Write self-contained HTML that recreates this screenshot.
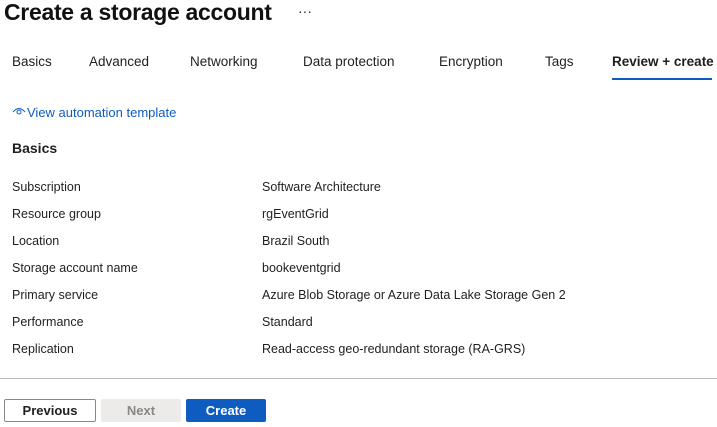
<!DOCTYPE html><html><head><style>
body{margin:0;width:717px;height:427px;overflow:hidden;background:#fff;font-family:"Liberation Sans",sans-serif;color:#201f1e;position:relative}
.a{position:absolute;white-space:nowrap}
h1{position:absolute;left:4px;top:-1px;margin:0;font-size:23px;font-weight:bold;letter-spacing:-0.3px;color:#111}
.t{font-size:13.5px;top:54px}
.r{font-size:12.5px}
.b{position:absolute;top:399px;height:23px;box-sizing:border-box;font-size:13px;font-weight:bold;text-align:center;line-height:23px;border-radius:2px}
</style></head><body>
<h1>Create a storage account</h1>
<div class="a" style="left:298px;top:3px;font-size:14px">···</div>
<div class="a t" style="left:12px">Basics</div>
<div class="a t" style="left:89px">Advanced</div>
<div class="a t" style="left:190px">Networking</div>
<div class="a t" style="left:303px">Data protection</div>
<div class="a t" style="left:439px">Encryption</div>
<div class="a t" style="left:545px">Tags</div>
<div class="a t" style="left:612px;font-weight:bold">Review + create</div>
<div class="a" style="left:612px;top:78px;width:100px;height:2px;background:#0f5cc0"></div>
<svg class="a" style="left:12px;top:106px" width="14" height="10" viewBox="0 0 14 10"><path d="M1 6Q7 -1 13 6" fill="none" stroke="#0f5cc0" stroke-width="1"/><circle cx="7" cy="6" r="2" fill="none" stroke="#0f5cc0"/></svg>
<div class="a" style="left:27px;top:105px;font-size:13px;color:#0f5cc0">View automation template</div>
<div class="a" style="left:12px;top:140px;font-size:14px;font-weight:bold">Basics</div>
<div class="a r" style="left:12px;top:180px">Subscription</div><div class="a r" style="left:262px;top:180px">Software Architecture</div>
<div class="a r" style="left:12px;top:207px">Resource group</div><div class="a r" style="left:262px;top:207px">rgEventGrid</div>
<div class="a r" style="left:12px;top:234px">Location</div><div class="a r" style="left:262px;top:234px">Brazil South</div>
<div class="a r" style="left:12px;top:261px">Storage account name</div><div class="a r" style="left:262px;top:261px">bookeventgrid</div>
<div class="a r" style="left:12px;top:288px">Primary service</div><div class="a r" style="left:262px;top:288px">Azure Blob Storage or Azure Data Lake Storage Gen 2</div>
<div class="a r" style="left:12px;top:315px">Performance</div><div class="a r" style="left:262px;top:315px">Standard</div>
<div class="a r" style="left:12px;top:342px">Replication</div><div class="a r" style="left:262px;top:342px">Read-access geo-redundant storage (RA-GRS)</div>
<div class="a" style="left:0;top:378px;width:717px;height:1px;background:#bbb"></div>
<div class="b" style="left:4px;width:92px;border:1px solid #8a8886;color:#201f1e;line-height:21px">Previous</div>
<div class="b" style="left:101px;width:80px;background:#edebe9;color:#8a8886">Next</div>
<div class="b" style="left:186px;width:80px;background:#0f5cc0;color:#fff">Create</div>
</body></html>
